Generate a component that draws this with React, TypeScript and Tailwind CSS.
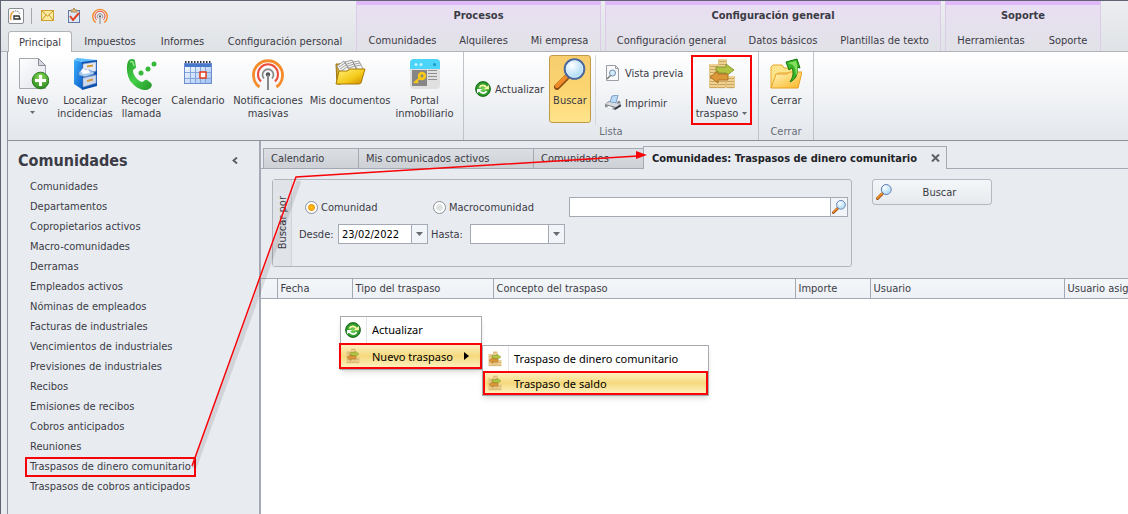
import type { ReactNode } from 'react';

type IconProps = { className?: string };

function NewPageIcon() {
  return (
    <svg className="w-8 h-8" viewBox="0 0 32 32">
      <defs>
        <linearGradient id="page" x1="0" y1="0" x2="1" y2="1">
          <stop offset="0" stopColor="#ffffff" />
          <stop offset="1" stopColor="#dfe2ea" />
        </linearGradient>
        <radialGradient id="plus" cx=".5" cy=".3" r=".8">
          <stop offset="0" stopColor="#8ede5a" />
          <stop offset="1" stopColor="#1c7d18" />
        </radialGradient>
      </defs>
      <path d="M2.5 .5h19l7 7v23h-26z" fill="url(#page)" stroke="#a5a8b0" />
      <path d="M21.5 .5v7h7z" fill="#d5d8df" stroke="#8a8d95" />
      <circle cx="23.5" cy="22.500" r="8.300" fill="url(#plus)" stroke="#2c7a20" />
      <path d="M23.500 17v11M18 22.500h11" stroke="#fff" strokeWidth="3" />
    </svg>
  );
}

function CabinetIcon() {
  return (
    <svg className="w-8 h-8" viewBox="0 0 32 32">
      <defs>
        <linearGradient id="cabinet" x1="0" y1="0" x2="1" y2="1">
          <stop offset="0" stopColor="#3ab0ff" />
          <stop offset="1" stopColor="#0a58c4" />
        </linearGradient>
      </defs>
      <path d="M5 2l9 2v28L5 26z" fill="url(#cabinet)" />
      <path d="M5 2l3-2 20 2-2 3-12-1z" fill="#5cbcff" />
      <path d="M13 4l15-2v26l-15 4z" fill="#0b4fae" />
      <path d="M14 6l13-2v9l-13 3z" fill="#e4eaf6" stroke="#8fa6cc" strokeWidth=".7" />
      <path d="M14 20l13-3v8l-13 4z" fill="#cdd8ee" stroke="#8fa6cc" strokeWidth=".7" />
      <path d="M10 14l4-3 6 1 5 2v2l-9 3-6-2z" fill="#a8ccf0" stroke="#5c88c4" strokeWidth=".7" />
      <path d="M12 13l2-3 3 2 2-1 2 4-7 1z" fill="#fff" />
      <path d="M18 7.500l6-1v2l-6 1zM18 22l6-1.500v2L18 24z" fill="#d59a38" />
    </svg>
  );
}

function PhoneIcon() {
  return (
    <svg className="w-8 h-8" viewBox="0 0 32 32">
      <defs>
        <linearGradient id="phone" x1="0" y1="0" x2="1" y2="1">
          <stop offset="0" stopColor="#2aa02e" />
          <stop offset=".5" stopColor="#44d048" />
          <stop offset="1" stopColor="#249428" />
        </linearGradient>
      </defs>
      <path
        d="M3 2c3-2 6-1 6 1l1 6c0 2-3 2-3 4 0 4 5 10 9 11 2 0 3-3 5-2l4 3c2 2 0 5-2 6-5 3-13-1-17-6C1 20-1 7 3 2z"
        fill="url(#phone)"
      />
      <path d="M4 4c2-1 3 0 3 1l1 3" stroke="#90e890" strokeWidth="1.500" fill="none" />
      <circle cx="15" cy="15" r="2.500" fill="#36b83a" />
      <circle cx="22" cy="11" r="2.500" fill="#36b83a" />
      <circle cx="28" cy="6" r="2.500" fill="#36b83a" />
    </svg>
  );
}

function CalendarIcon() {
  return (
    <svg className="w-8 h-8" viewBox="0 0 32 32">
      <defs>
        <linearGradient id="cal" x1="0" y1="0" x2="1" y2="1">
          <stop offset="0" stopColor="#ffffff" />
          <stop offset="1" stopColor="#9cc0f4" />
        </linearGradient>
      </defs>
      <rect x="2.500" y="5.500" width="27" height="20" fill="url(#cal)" stroke="#6c8ccc" />
      <rect x="3" y="6" width="26" height="3" fill="#4878cc" />
      <path d="M3 4h27" stroke="#2d3342" strokeWidth="2" strokeDasharray="1.500 1.500" />
      <path d="M3 14.500h26M3 20.500h26M8.500 9v16M13.500 9v16M18.500 9v16M23.500 9v16" stroke="#84a4dc" />
      <rect x="18" y="14" width="6" height="6" fill="#fff" stroke="#e03c18" strokeWidth="1.500" />
    </svg>
  );
}

function PodcastIcon({ className = 'w-8 h-8' }: IconProps) {
  return (
    <svg className={className} viewBox="0 0 32 32" fill="none">
      <path d="M7.500 29A14.500 14.500 0 1 1 24.500 29" stroke="#f48c2c" strokeWidth="2.800" />
      <path d="M9 23.500A10 10 0 1 1 23 23.500" stroke="#ec4c3c" strokeWidth="2" />
      <path d="M12 20.500A5.500 5.500 0 1 1 20 20.500" stroke="#8a8a8a" strokeWidth="1.800" />
      <circle cx="16" cy="16.500" r="2.200" fill="#555" />
      <path d="M16 17v15" stroke="#888" strokeWidth="2" />
    </svg>
  );
}

function DocumentsIcon() {
  return (
    <svg className="w-8 h-8" viewBox="0 0 32 32">
      <defs>
        <linearGradient id="docs" x1="0" y1="0" x2="1" y2="1">
          <stop offset="0" stopColor="#fff27a" />
          <stop offset=".6" stopColor="#f4c818" />
          <stop offset="1" stopColor="#c88400" />
        </linearGradient>
      </defs>
      <path d="M2 6h5v20H3z" fill="#d8a820" stroke="#9a7410" />
      <path d="M3 8l7-5 6 9-9 4zM11 4l7-2 5 9-7 3zM19 4l6-1 4 8-5 4z" fill="#f5f5f5" stroke="#888" strokeWidth=".8" />
      <path d="M5 9l6-4M6 11l6-4M7 13l6-4M13 6l6-2M14 8l6-2M15 10l6-2M21 6l5-1M22 8l5-1" stroke="#8c8c8c" strokeWidth=".8" />
      <path d="M5 13h8l3-2h15l-4 14-2 1H2z" fill="url(#docs)" stroke="#a87a08" />
    </svg>
  );
}

function PortalIcon() {
  return (
    <svg className="w-8 h-8" viewBox="0 0 32 32">
      <rect x="1" y="1" width="30" height="30" rx="4" fill="#e0e0e0" />
      <path d="M1 11V5a4 4 0 0 1 4-4h22a4 4 0 0 1 4 4v6z" fill="#4cd4fa" />
      <circle cx="7" cy="6.500" r="1.500" fill="#c8f4ff" />
      <circle cx="12" cy="6.500" r="1.500" fill="#c8f4ff" />
      <circle cx="25.500" cy="6.500" r="1.500" fill="#1898c0" />
      <rect x="3" y="12" width="15" height="16" fill="#868686" />
      <circle cx="13" cy="18" r="2.800" stroke="#f8c818" strokeWidth="2.800" fill="none" />
      <path d="M11 20l-6 5M7 23l2 2" stroke="#f8c818" strokeWidth="2" />
      <path d="M19 12.500h9M19 15.500h9M19 18.500h9M19 21.500h9" stroke="#909090" />
    </svg>
  );
}

function RefreshIcon() {
  return (
    <svg className="w-4 h-4 shrink-0" viewBox="0 0 16 16">
      <defs>
        <radialGradient id="refresh">
          <stop offset="0" stopColor="#7ed860" />
          <stop offset="1" stopColor="#1f8a20" />
        </radialGradient>
      </defs>
      <circle cx="8" cy="8" r="7.400" fill="url(#refresh)" stroke="#1c6c20" strokeWidth="1" />
      <path d="M4.500 6.500C5.500 4 9 3.500 11.500 6.500" stroke="#fbf8a8" strokeWidth="1.800" fill="none" />
      <path d="M8.800 8.200h5.200V4z" fill="#fbf8a8" />
      <path d="M11.500 10C10.500 12.500 7 13 4.500 10" stroke="#fff" strokeWidth="1.800" fill="none" />
      <path d="M7.200 8H2v4.200z" fill="#fff" />
    </svg>
  );
}

function SearchIcon({ className = 'w-8 h-8' }: IconProps) {
  return (
    <svg className={className} viewBox="0 0 32 32">
      <defs>
        <radialGradient id="lens" cx=".35" cy=".3" r=".8">
          <stop offset="0" stopColor="#ffffff" />
          <stop offset="1" stopColor="#9ad4f4" />
        </radialGradient>
      </defs>
      <path d="M14 18l-3 3" stroke="#505868" strokeWidth="4" />
      <path d="M12 20l-9 9" stroke="#8a4c18" strokeWidth="6" strokeLinecap="round" />
      <path d="M12 19l-9 9" stroke="#f08c28" strokeWidth="4" strokeLinecap="round" />
      <circle cx="20.500" cy="11" r="9.800" fill="url(#lens)" stroke="#4a68a0" strokeWidth="2" />
      <circle cx="20.500" cy="11" r="8.200" fill="none" stroke="#d8ecfa" />
    </svg>
  );
}

function PreviewIcon() {
  return (
    <svg className="w-4 h-4 shrink-0" viewBox="0 0 16 16">
      <path d="M1.500.500h9l3 3v12h-12z" fill="#fafafa" stroke="#9a9ea6" />
      <path d="M10.500.500v3h3" fill="none" stroke="#9a9ea6" />
      <path d="M6 10l-4 4" stroke="#777" strokeWidth="1.500" />
      <circle cx="7.500" cy="8" r="3" fill="#d4ecf8" stroke="#6c8cac" />
    </svg>
  );
}

function PrinterIcon() {
  return (
    <svg className="w-4 h-4 shrink-0" viewBox="0 0 16 16">
      <path d="M7 1l6-1-2 8-6-1z" fill="#b8dcf8" stroke="#6888b8" strokeWidth=".8" />
      <path d="M0 9l4-3h1l-1 2 7 2 2-4h2l1 5-6 4-10-3z" fill="#84888f" />
      <path d="M0 9l4-2 7 2 5-1-5 4z" fill="#d8dbe0" />
      <path d="M1 12l5 2 3-1-5-2z" fill="#fff" />
      <path d="M10 14l6-3.500" stroke="#30343c" strokeWidth="1.500" />
    </svg>
  );
}

function CoinStack({ x, y, count }: { x: number; y: number; count: number }) {
  return (
    <g>
      {Array.from({ length: count }, (_, i) => (
        <g key={i}>
          <rect x={x} y={y + i * 3} width="9" height="3" rx="1" fill="#e2bc74" />
          <path d={`M${x + 1} ${y + i * 3 + 1}h7`} stroke="#f8e8b8" />
          <path d={`M${x + 1} ${y + i * 3 + 2.7}h7`} stroke="#b88c40" strokeWidth=".6" />
        </g>
      ))}
    </g>
  );
}

function CoinsIcon({ className = 'w-8 h-8' }: IconProps) {
  return (
    <svg className={className} viewBox="0 0 32 32">
      <CoinStack x={12} y={1} count={9} />
      <CoinStack x={3} y={6} count={8} />
      <CoinStack x={20} y={18} count={4} />
      <CoinStack x={11} y={21} count={3} />
      <path d="M10 9h10V6l8 6-8 6v-3H10z" fill="#b0c440" stroke="#788c28" strokeWidth=".8" />
      <path d="M22 16H12v-3l-8 6 8 6v-3h10z" fill="#dc9838" stroke="#a06820" strokeWidth=".8" />
    </svg>
  );
}

function CloseFolderIcon() {
  return (
    <svg className="w-8 h-8" viewBox="0 0 32 32">
      <defs>
        <linearGradient id="folder" x1="0" y1="0" x2="1" y2="1">
          <stop offset="0" stopColor="#fff8c0" />
          <stop offset="1" stopColor="#fbb424" />
        </linearGradient>
      </defs>
      <path d="M1 30V9l2-2h9l2 3h13v5H8z" fill="#fce48c" stroke="#e8a820" />
      <path d="M1 30l5-14h11l3-2h12l-4 16z" fill="url(#folder)" stroke="#e8a020" />
      <path d="M16 4l11-3 3 9-3-1c1 8-1 12-7 15 3-5 4-9 2-14l-3 2z" fill="#3cb428" stroke="#187810" />
      <path d="M18 5l8-2c2 6 2 11 0 15 0-5-1-9-3-11z" fill="#84e060" />
    </svg>
  );
}

function AppIcon() {
  return (
    <svg className="w-4 h-4" viewBox="0 0 16 16">
      <rect x=".500" y=".500" width="15" height="15" rx="1.500" fill="#fdfdfd" stroke="#888c94" />
      <path d="M3 12c-1-3 0-7 2-8" stroke="#f0a040" strokeWidth="1.500" fill="none" />
      <path d="M5 4c2-2 6-1 7 2" stroke="#555" strokeDasharray="1 1" fill="none" />
      <path d="M6 11V8h5l1 3z" fill="#fff" stroke="#333" strokeWidth="1.400" />
    </svg>
  );
}

function MailIcon() {
  return (
    <svg className="w-4 h-4" viewBox="0 0 16 16">
      <rect x="1.500" y="2.500" width="12" height="10" fill="#fdeca0" stroke="#d0a030" />
      <path d="M2 3l5.500 5L13 3M2 12l4-5M13 12L9 7" stroke="#c89828" fill="none" />
    </svg>
  );
}

function TaskIcon() {
  return (
    <svg className="w-4 h-4" viewBox="0 0 16 16">
      <rect x="2.500" y="2.500" width="11" height="12" fill="#dce8fa" stroke="#6478a4" />
      <path d="M5 4V2h2l1-2 1 2h2v2z" fill="#e8c080" stroke="#a88858" />
      <path d="M4 8l3 4 6-7" stroke="#e04020" strokeWidth="2" fill="none" />
    </svg>
  );
}

function Caret({ className = '' }: IconProps) {
  return (
    <svg className={`w-[5px] h-[3px] shrink-0 ${className}`} viewBox="0 0 5 3">
      <path d="M0 0h5L2.500 3z" fill="#666a72" />
    </svg>
  );
}

const mainTabs = [
  { label: 'Principal', width: 'w-[64px]', active: true },
  { label: 'Impuestos', width: 'w-[76px]' },
  { label: 'Informes', width: 'w-[69px]' },
  { label: 'Configuración personal', width: 'w-[136px]' },
];

const contextGroups = [
  {
    title: 'Procesos',
    tabs: [
      { label: 'Comunidades', width: 'w-[91px]' },
      { label: 'Alquileres', width: 'w-[71px]' },
      { label: 'Mi empresa', width: 'w-[81px]' },
    ],
  },
  {
    title: 'Configuración general',
    tabs: [
      { label: 'Configuración general', width: 'w-[131px]' },
      { label: 'Datos básicos', width: 'w-[92px]' },
      { label: 'Plantillas de texto', width: 'w-[111px]' },
    ],
  },
  {
    title: 'Soporte',
    tabs: [
      { label: 'Herramientas', width: 'w-[90px]' },
      { label: 'Soporte', width: 'w-[64px]' },
    ],
  },
];

const sideLinks = [
  'Comunidades',
  'Departamentos',
  'Copropietarios activos',
  'Macro-comunidades',
  'Derramas',
  'Empleados activos',
  'Nóminas de empleados',
  'Facturas de industriales',
  'Vencimientos de industriales',
  'Previsiones de industriales',
  'Recibos',
  'Emisiones de recibos',
  'Cobros anticipados',
  'Reuniones',
  'Traspasos de dinero comunitario',
  'Traspasos de cobros anticipados',
];

const columns = [
  { label: '', width: 'w-[16px]' },
  { label: 'Fecha', width: 'w-[75px]' },
  { label: 'Tipo del traspaso', width: 'w-[141px]' },
  { label: 'Concepto del traspaso', width: 'w-[302px]' },
  { label: 'Importe', width: 'w-[75px]' },
  { label: 'Usuario', width: 'w-[194px]' },
  { label: 'Usuario asignado', width: '' },
];

function BigButton({ icon, width, children }: { icon: ReactNode; width: string; children: ReactNode }) {
  return (
    <button className={`${width} h-[68px] shrink-0 flex flex-col items-center pt-[3px]`}>
      {icon}
      <span className="mt-1 leading-[13px] text-center whitespace-nowrap">{children}</span>
    </button>
  );
}

function Header() {
  return (
    <header className="flex h-[51px] bg-gradient-to-b from-[#eceef1] to-[#dfe2e6] border-b border-[#b0b4b8] pl-[7px]">
      <div className="w-[348px] shrink-0 flex flex-col justify-between">
        <div className="flex items-center h-[29px]">
          <button aria-label="Aplicación"><AppIcon /></button>
          <span className="w-px h-4 bg-[#a4a8ae] ml-[7px] mr-2"></span>
          <button aria-label="Correo"><MailIcon /></button>
          <button aria-label="Tareas" className="ml-[10px]"><TaskIcon /></button>
          <button aria-label="Notificaciones" className="ml-[10px]"><PodcastIcon className="w-4 h-4" /></button>
        </div>
        <nav className="flex h-[21px] -mb-px">
          {mainTabs.map((tab) => (
            <button
              key={tab.label}
              className={`${tab.width} whitespace-nowrap ${
                tab.active ? 'bg-white border border-b-0 border-[#b0b4b8] rounded-t-[3px]' : ''
              }`}
            >
              {tab.label}
            </button>
          ))}
        </nav>
      </div>
      <div className="flex gap-1">
        {contextGroups.map((group) => (
          <div
            key={group.title}
            className="flex flex-col border-t-4 border-t-[#dfb9fa] border-x border-x-[#dccbe8] bg-gradient-to-b from-[#e9dff3] to-[#e1e2e7]"
          >
            <h2 className="h-[25px] leading-[21px] text-center font-bold">{group.title}</h2>
            <div className="flex h-[21px]">
              {group.tabs.map((tab) => (
                <button key={tab.label} className={`${tab.width} whitespace-nowrap`}>
                  {tab.label}
                </button>
              ))}
            </div>
          </div>
        ))}
      </div>
    </header>
  );
}

function Ribbon() {
  return (
    <div className="flex h-[89px] ml-[6px] bg-gradient-to-b from-white to-[#e3e7ec] border-l border-b border-[#8d9199]">
      <section className="w-[456px] shrink-0 flex pl-1 pt-[3px] border-r border-[#c0c4ca]">
        <BigButton icon={<NewPageIcon />} width="w-[41px]">
          Nuevo
          <Caret className="mx-auto mt-1" />
        </BigButton>
        <BigButton icon={<CabinetIcon />} width="w-[64px]">Localizar<br />incidencias</BigButton>
        <BigButton icon={<PhoneIcon />} width="w-[49px]">Recoger<br />llamada</BigButton>
        <BigButton icon={<CalendarIcon />} width="w-[64px]">Calendario</BigButton>
        <BigButton icon={<PodcastIcon />} width="w-[76px]">Notificaciones<br />masivas</BigButton>
        <BigButton icon={<DocumentsIcon />} width="w-[88px]">Mis documentos</BigButton>
        <BigButton icon={<PortalIcon />} width="w-[61px]">Portal<br />inmobiliario</BigButton>
      </section>
      <section className="w-[295px] shrink-0 flex flex-col border-r border-[#c0c4ca]">
        <div className="flex pt-[3px] pl-[11px]">
          <button className="flex items-center gap-1 w-[74px] h-[68px]">
            <RefreshIcon />
            Actualizar
          </button>
          <button className="w-[42px] h-[68px] flex flex-col items-center pt-[2px] border border-[#c29b4a] rounded-[3px] bg-gradient-to-b from-[#f7cd6e] via-[#fbd570] to-[#ffe48c]">
            <SearchIcon />
            <span className="mt-1 leading-[13px]">Buscar</span>
          </button>
          <div className="ml-1 pl-[9px] w-[96px] flex flex-col gap-[6px] pt-[6px] border-l border-[#d4d8dd]">
            <button className="flex items-center gap-1 h-6"><PreviewIcon />Vista previa</button>
            <button className="flex items-center gap-1 h-6"><PrinterIcon />Imprimir</button>
          </div>
          <button className="w-[61px] h-[70px] flex flex-col items-center pt-px border-2 border-[#f80408]">
            <CoinsIcon />
            <span className="mt-1 leading-[13px] text-center">
              Nuevo<br />
              <span className="flex items-center gap-1 whitespace-nowrap">traspaso <Caret /></span>
            </span>
          </button>
        </div>
        <h3 className="text-center text-[#666c78] leading-[13px]">Lista</h3>
      </section>
      <section className="w-[55px] shrink-0 flex flex-col items-center pt-[3px] border-r border-[#c0c4ca]">
        <BigButton icon={<CloseFolderIcon />} width="w-[48px]">Cerrar</BigButton>
        <h3 className="mt-[2px] text-[#666c78] leading-[13px]">Cerrar</h3>
      </section>
    </div>
  );
}

function Sidebar() {
  return (
    <aside className="w-[253px] shrink-0 border-r-2 border-[#a4a9b3] pt-[9px]">
      <div className="flex items-center justify-between pl-[10px] pr-[21px] h-[20px]">
        <h1 className="text-[16px] font-bold">Comunidades</h1>
        <button aria-label="Contraer panel">
          <svg className="w-[6px] h-[7px]" viewBox="0 0 6 7" fill="none">
            <path d="M5 .500L1.500 3.500 5 6.500" stroke="#555a62" strokeWidth="1.800" />
          </svg>
        </button>
      </div>
      <nav className="mt-[7px] pl-[17px] flex flex-col items-start">
        {sideLinks.map((link) => (
          <a
            key={link}
            href="#"
            className={`h-5 leading-4 px-[3px] border-2 whitespace-nowrap ${
              link === 'Traspasos de dinero comunitario' ? 'border-[#f80408]' : 'border-transparent'
            }`}
          >
            {link}
          </a>
        ))}
      </nav>
    </aside>
  );
}

function DocumentTabs() {
  const tab = 'h-[21px] text-left bg-gradient-to-b from-[#dcdfe3] to-[#cdd1d5] border border-r-0 border-[#a4a9b3]';
  return (
    <div className="flex items-end h-[28px]">
      <div className="w-[2px] border-b border-[#a4a9b3] self-stretch"></div>
      <button className={`${tab} w-[95px] pl-[7px]`}>Calendario</button>
      <button className={`${tab} w-[175px] pl-[7px]`}>Mis comunicados activos</button>
      <button className={`${tab} w-[110px] pl-[7px]`}>Comunidades</button>
      <div className="flex items-center h-[23px] w-[304px] pl-2 border border-b-0 border-[#a4a9b3]">
        <button className="font-bold text-[#202226] whitespace-nowrap grow text-left">
          Comunidades: Traspasos de dinero comunitario
        </button>
        <button aria-label="Cerrar pestaña" className="mr-[6px]">
          <svg className="w-[9px] h-[8px]" viewBox="0 0 9 8">
            <path d="M1 .500l7 7M8 .500l-7 7" stroke="#5c6068" strokeWidth="2" />
          </svg>
        </button>
      </div>
      <div className="grow border-b border-[#a4a9b3] self-stretch"></div>
    </div>
  );
}

function DateField({ id, label, value, width }: { id: string; label: string; value: string; width: string }) {
  return (
    <div className="flex items-center">
      <label htmlFor={id} className="w-[39px]">{label}</label>
      <div className={`${width} flex h-5 border border-[#a4a9b3] bg-white`}>
        <input id={id} defaultValue={value} className="grow w-0 pl-[3px] text-black outline-none" />
        <button
          aria-label={`Abrir calendario ${label}`}
          className="w-4 shrink-0 flex items-center justify-center border-l border-[#a4a9b3] bg-[#f1f4f8]"
        >
          <svg className="w-[7px] h-1" viewBox="0 0 7 4"><path d="M0 0h7L3.500 4z" fill="#666a72" /></svg>
        </button>
      </div>
    </div>
  );
}

function SearchPanel() {
  const radio =
    'appearance-none w-[13px] h-[13px] rounded-full border border-[#8c9098] bg-[radial-gradient(circle,#d8dadd_0,#e4e6e8_3px,#ffffff_4px)] checked:bg-[radial-gradient(circle,#ffc21a_0,#f0a010_3px,#ffffff_4px)]';
  return (
    <div className="flex items-start pl-[11px] pt-[10px] h-[109px]">
      <fieldset className="flex w-[580px] h-[88px] border border-[#b0b4bc] rounded-[3px]">
        <div className="w-[19px] shrink-0 flex items-center justify-center border-r border-[#d0d4d9] bg-[#e0e3e8]">
          <span className="[writing-mode:vertical-rl] rotate-180 whitespace-nowrap">Buscar por</span>
        </div>
        <div className="grow pl-[7px] pr-[3px] pt-[17px]">
          <div className="flex items-center h-5">
            <label className="flex items-center gap-[3px] w-[128px] pl-[6px]">
              <input type="radio" name="ambito" defaultChecked className={radio} />
              Comunidad
            </label>
            <label className="flex items-center gap-[3px] w-[142px] pl-[6px]">
              <input type="radio" name="ambito" className={radio} />
              Macrocomunidad
            </label>
            <div className="flex grow h-5 border border-[#a4a9b3] bg-white">
              <input aria-label="Comunidad" className="grow w-0 px-1 outline-none" />
              <button
                aria-label="Buscar comunidad"
                className="w-[17px] flex items-center justify-center border-l border-[#a4a9b3] bg-[#f1f4f8]"
              >
                <SearchIcon className="w-[14px] h-[14px]" />
              </button>
            </div>
          </div>
          <div className="flex gap-[3px] mt-[7px]">
            <DateField id="desde" label="Desde:" value="23/02/2022" width="w-[90px]" />
            <DateField id="hasta" label="Hasta:" value="" width="w-[95px]" />
          </div>
        </div>
      </fieldset>
      <button className="ml-5 flex items-center w-[120px] h-[26px] pl-[3px] border border-[#b4b8c0] rounded-[3px] bg-gradient-to-b from-[#f4f7f9] to-[#e6eaee]">
        <SearchIcon className="w-4 h-4" />
        <span className="grow text-center pr-1">Buscar</span>
      </button>
    </div>
  );
}

function TransfersTable() {
  return (
    <table className="w-full table-fixed border-collapse">
      <thead>
        <tr className="h-[20px] bg-gradient-to-b from-[#f4f7fa] to-[#edf0f4]">
          {columns.map((col) => (
            <th
              key={col.label}
              className={`${col.width} h-[20px] pl-[3px] text-left font-normal leading-4 whitespace-nowrap overflow-hidden border-y border-r last:border-r-0 border-[#a4a9b3]`}
            >
              {col.label}
            </th>
          ))}
        </tr>
      </thead>
    </table>
  );
}

function ContextMenu() {
  const highlight = 'border-2 border-[#f80408] bg-gradient-to-b from-[#fcf0c0] via-[#f6d97c] to-[#fdf0bc]';
  return (
    <div className="font-['Noto_Sans','Open_Sans',sans-serif] text-[11px] text-black">
      <div className="absolute left-[339px] top-[315px] w-[142px] border border-[#a7abb0] bg-white shadow-md">
        <button className="flex items-center w-full h-[26px] pl-1">
          <RefreshIcon />
          <span className="h-[26px] leading-[26px] ml-[5px] pl-[5px] border-l border-[#e2e4e7]">Actualizar</span>
        </button>
        <button className={`flex items-center h-[26px] w-[143px] -ml-[2px] pl-1 ${highlight}`}>
          <CoinsIcon className="w-4 h-4" />
          <span className="ml-[11px] grow text-left whitespace-nowrap">Nuevo traspaso</span>
          <svg className="w-[5px] h-2 mr-[11px]" viewBox="0 0 5 8"><path d="M0 0v8l5-4z" fill="#000" /></svg>
        </button>
      </div>
      <div className="absolute left-[481px] top-[344px] w-[227px] border border-[#a7abb0] bg-white shadow-md">
        <button className="flex items-center w-full h-[25px] pl-1">
          <CoinsIcon className="w-4 h-4" />
          <span className="h-[25px] leading-[25px] ml-[5px] pl-[5px] border-l border-[#e2e4e7] whitespace-nowrap">
            Traspaso de dinero comunitario
          </span>
        </button>
        <button className={`flex items-center h-6 w-[225px] pl-[2px] ${highlight}`}>
          <CoinsIcon className="w-4 h-4" />
          <span className="ml-[11px]">Traspaso de saldo</span>
        </button>
      </div>
    </div>
  );
}

function GuideArrow() {
  return (
    <svg className="absolute left-0 top-0 w-[1128px] h-[514px] pointer-events-none" viewBox="0 0 1128 514" fill="none">
      <path d="M193 467L298 180" stroke="#000" strokeOpacity=".1" strokeWidth="5" />
      <path d="M191 465L295 176 637 155" stroke="#f80408" strokeWidth="1.500" />
      <path d="M646 154l-11-4v8z" fill="#f80408" />
    </svg>
  );
}

export default function App() {
  return (
    <div className="relative min-h-screen flex flex-col overflow-hidden bg-[#e8ecf1] border-t border-l border-[#5f6470] font-['DejaVu_Sans_Condensed','Noto_Sans',sans-serif] text-[11px] leading-[15px] text-[#3b3b45]">
      <Header />
      <Ribbon />
      <div className="grow flex ml-[6px] border-l border-[#8d9199]">
        <Sidebar />
        <main className="grow min-w-0 flex flex-col">
          <DocumentTabs />
          <SearchPanel />
          <div className="grow bg-white">
            <TransfersTable />
          </div>
        </main>
      </div>
      <ContextMenu />
      <GuideArrow />
    </div>
  );
}
